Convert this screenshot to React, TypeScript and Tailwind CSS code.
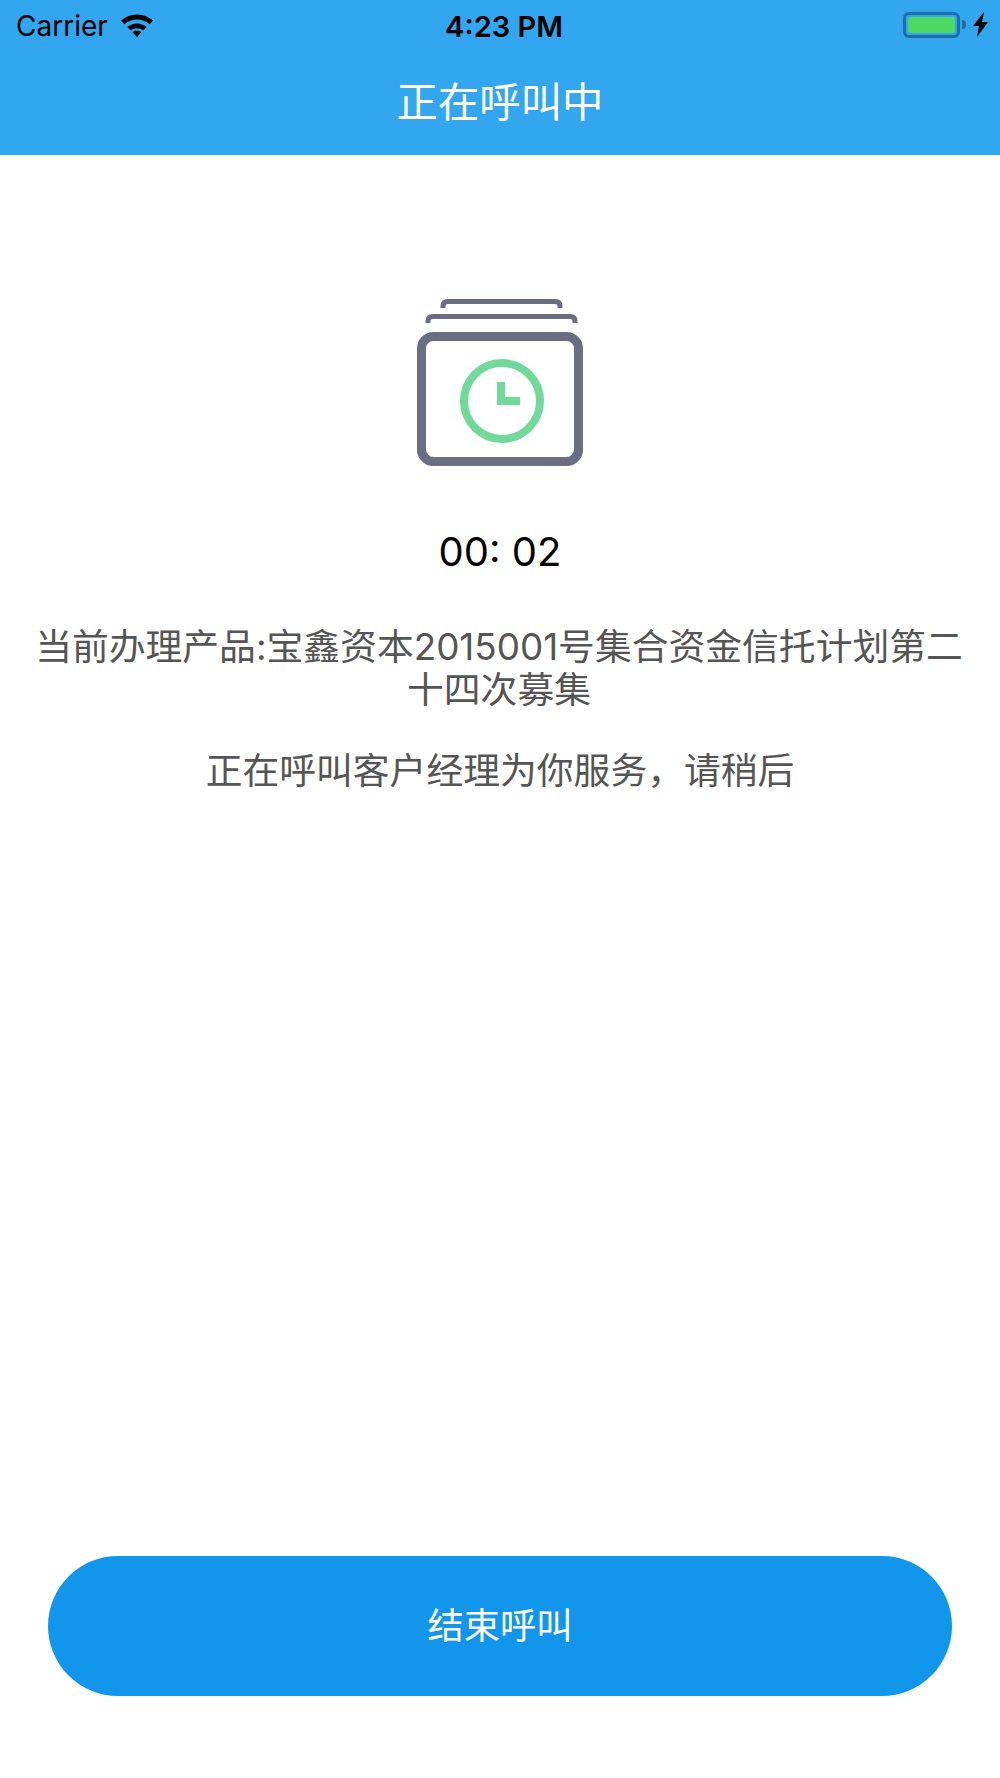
const cjk = "font-['Inter','Noto_Sans_CJK_SC',sans-serif]";

function StatusBar() {
  return (
    <div className="flex h-[52px] items-center justify-between pl-4 pr-[12px] text-black">
      <div className="flex w-[300px] items-center gap-[12px]">
        <span className="text-[28px] leading-none font-['Inter',sans-serif]">Carrier</span>
        <svg className="mb-[3px]" width="34" height="24" viewBox="0 0 34 24">
          <path d="M1 7.5C10 -0.5 24 -0.5 33 7.5L29.6 11.2C22.5 5 11.5 5 4.4 11.2Z" fill="#000" />
          <path d="M7.4 14C13 9.2 21 9.2 26.6 14L23.2 17.4C19.5 14.4 14.5 14.4 10.8 17.4Z" fill="#000" />
          <path d="M12.6 19.2C15 17.4 19 17.4 21.4 19.2L17 24Z" fill="#000" />
        </svg>
      </div>
      <span className="ml-[4px] text-[29px] leading-none font-semibold font-['Inter',sans-serif]">4:23 PM</span>
      <div className="flex w-[300px] items-center justify-end gap-[7px] pb-[3px]">
        <div className="flex items-center gap-[2px]">
          <div className="flex h-[26px] w-[57px] items-center rounded-[6px] border-[3px] border-[#1f6ea6] p-[2px]">
            <div className="h-full w-full rounded-[3px] bg-[#4cd964]" />
          </div>
          <div className="h-[9px] w-[4px] rounded-r-full bg-[#1f6ea6]" />
        </div>
        <svg width="15" height="25" viewBox="0 0 15 25">
          <path d="M11 0L0 14H6L4 25L15 10H9Z" fill="#000" />
        </svg>
      </div>
    </div>
  );
}

function CallIcon() {
  return (
    <svg width="168" height="168" viewBox="0 0 168 168">
      <path d="M27 9V7Q27 2.5 32 2.5H139Q144 2.5 144 7V9" fill="none" stroke="#6b6d82" strokeWidth="5" />
      <path d="M12 24V22Q12 17.5 17 17.5H154Q159 17.5 159 22V24" fill="none" stroke="#6b6d82" strokeWidth="5" />
      <rect x="5.5" y="37.5" width="157" height="125" rx="12" fill="none" stroke="#6b6d82" strokeWidth="9" />
      <circle cx="86" cy="102" r="38" fill="none" stroke="#72d99b" strokeWidth="8" />
      <path d="M81 83H89V98H104V106H81Z" fill="#72d99b" />
    </svg>
  );
}

export default function App() {
  return (
    <div className={`flex min-h-[1778px] w-[1000px] flex-col bg-white ${cjk}`}>
      <header className="flex h-[155px] flex-col bg-[#32a6ee]">
        <StatusBar />
        <div className="flex flex-1 items-center justify-center pb-[2px] text-[41.4px] leading-none text-white">
          正在呼叫中
        </div>
      </header>

      <main className="flex flex-1 flex-col items-center">
        <div className="mt-[144px] flex h-[168px]">
          <CallIcon />
        </div>
        <div className="mt-[61px] text-[40px] leading-[48px] text-black">00: 02</div>
        <p className="mt-[49px] pl-[29px] pr-[31px] text-center text-[36.8px] leading-[43px] text-[#555555]">
          当前办理产品:宝鑫资本2015001号集合资金信托计划第二十四次募集
        </p>
        <p className="mt-[38px] text-[36.8px] leading-[43px] text-[#555555]">
          正在呼叫客户经理为你服务，请稍后
        </p>
      </main>

      <div className="px-[48px] pb-[82px]">
        <button className="flex h-[140px] w-full items-center justify-center rounded-full bg-[#1196ec] text-[36.3px] text-white">
          结束呼叫
        </button>
      </div>
    </div>
  );
}
